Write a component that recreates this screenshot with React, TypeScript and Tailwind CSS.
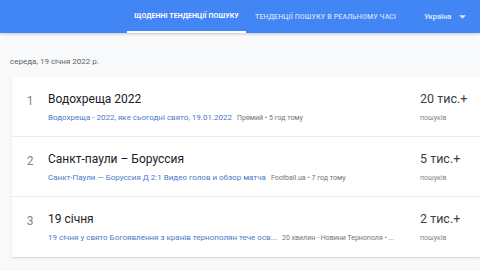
const rows = [
  {
    n: 1,
    title: "Водохреща 2022",
    link: "Водохреща - 2022, яке сьогодні свято, 19.01.2022",
    meta: "Прямий • 5 год тому",
    count: "20 тис.+",
  },
  {
    n: 2,
    title: "Санкт-паули – Боруссия",
    link: "Санкт-Паули — Боруссия Д 2:1 Видео голов и обзор матча",
    meta: "Football.ua • 7 год тому",
    count: "5 тис.+",
  },
  {
    n: 3,
    title: "19 січня",
    link: "19 січня у свято Богоявлення з кранів тернополян тече осв...",
    meta: "20 хвилин - Новини Тернополя • ...",
    count: "2 тис.+",
  },
];

export default function App() {
  return (
    <div className="w-[480px] h-[271px] overflow-hidden bg-[#f8f9fa] font-['Roboto',sans-serif]">
      <header className="h-[33px] bg-[#4285f4] flex items-stretch shadow-[0_1px_3px_rgba(0,0,0,0.2)] relative">
        <div className="ml-[127px] w-[119px] flex items-center justify-center border-b-[2px] border-white pt-[2px]">
          <span className="text-[7px] font-bold text-white tracking-[0.01em]">ЩОДЕННІ ТЕНДЕНЦІЇ ПОШУКУ</span>
        </div>
        <div className="ml-[9px] flex items-center pt-[1px]">
          <span className="text-[7px] font-medium text-white/75 tracking-[0.02em]">ТЕНДЕНЦІЇ ПОШУКУ В РЕАЛЬНОМУ ЧАСІ</span>
        </div>
        <div className="ml-[28px] flex items-center gap-[8px]">
          <span className="text-[7.5px] font-medium text-white/85">Україна</span>
          <svg width="7" height="4" viewBox="0 0 10 5" className="fill-white/80">
            <path d="M0 0 L5 5 L10 0 Z" />
          </svg>
        </div>
      </header>

      <div className="pl-[10px] pt-[25px] text-[8px] text-[#5f6368] leading-none">
        середа, 19 січня 2022 р.
      </div>

      <div className="ml-[12px] mt-[11px] bg-white shadow-[0_1px_2px_rgba(60,64,67,0.2)] rounded-[2px]">
        {rows.map((r, i) => (
          <div
            key={r.n}
            className={`h-[60px] flex ${i < rows.length - 1 ? "border-b border-[#e8eaed]" : ""}`}
          >
            <div className="w-[36px] pt-[15px] text-center text-[12px] text-[#80868b]">{r.n}</div>
            <div className="flex-1 pt-[14px] min-w-0">
              <div className="text-[12px] text-[#202124] leading-[16px]">{r.title}</div>
              <div className="mt-[6px] flex items-center gap-[5px] leading-[10px] whitespace-nowrap">
                <span className="text-[8px] text-[#4c78c8]">{r.link}</span>
                <span className="text-[7px] text-[#70757a]">{r.meta}</span>
              </div>
            </div>
            <div className="w-[60px] pt-[14px]">
              <div className="text-[12.5px] text-[#3c4043] leading-[16px]">{r.count}</div>
              <div className="mt-[6px] text-[7px] text-[#80868b] leading-[10px]">пошуків</div>
            </div>
          </div>
        ))}
      </div>
    </div>
  );
}
